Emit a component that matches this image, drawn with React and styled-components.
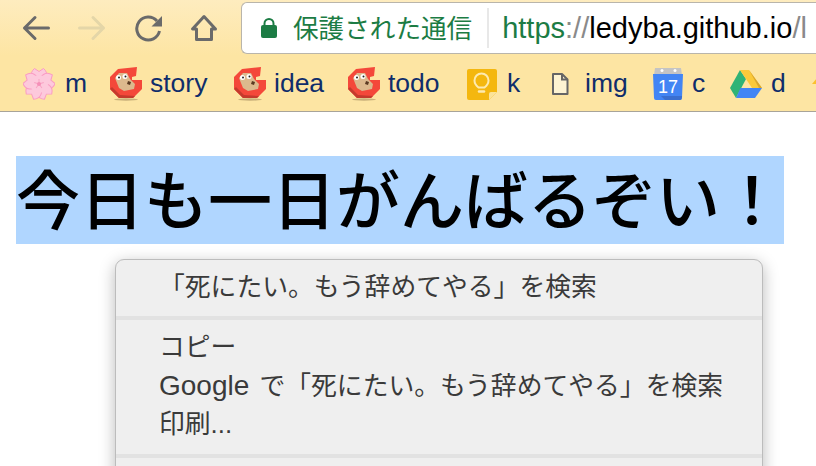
import React from "react";
import styled, { createGlobalStyle } from "styled-components";

const CJK = `"Liberation Sans", "Noto Sans CJK JP", sans-serif`;
const PETAL = "M16 17C7 14 6 6 11.500 1.500L16 4.500L20.500 1.500C26 6 25 14 16 17z";
const ANGLES = [0, 72, 144, 216, 288];

const Global = createGlobalStyle`
  html, body {
    margin: 0;
    padding: 0;
    background: #fff;
    overflow: hidden;
  }
`;

const Page = styled.div`
  position: relative;
  width: 816px;
  height: 466px;
  overflow: hidden;
  font-family: ${CJK};
`;

const Chrome = styled.div`
  height: 111px;
  background: linear-gradient(#feecbf 0, #fde5a3 56px, #fde5a3 100%);
  border-bottom: 1px solid #a8a49a;
  overflow: hidden;
`;

const Toolbar = styled.div`
  display: flex;
  align-items: center;
  gap: 28px;
  height: 56px;
  padding-left: 22px;
  box-sizing: border-box;
`;

const NavIcon = styled.svg`
  width: 28px;
  height: 28px;
  flex: none;
`;

const Omnibox = styled.div`
  display: flex;
  align-items: center;
  flex: none;
  width: 600px;
  height: 52px;
  margin-left: -5px;
  padding-left: 18px;
  box-sizing: border-box;
  background: #fff;
  border: 1px solid #b9b5ab;
  border-right: 0;
  border-radius: 6px 0 0 6px;
  font-size: 29px;
  white-space: nowrap;
`;

const Secure = styled.span`
  color: #1c7c44;
  font-size: 25.600px;
  line-height: 1;
  margin: 4px 0 0 15px;
`;

const Divider = styled.span`
  width: 2px;
  height: 40px;
  background: #e8e8e8;
  margin: 0 13px 0 15px;
`;

const Scheme = styled.span`
  color: #1c7c44;
`;

const Slashes = styled.span`
  color: #8a8a8a;
`;

const Host = styled.span`
  color: #000;
`;

const Bookmarks = styled.div`
  display: flex;
  align-items: center;
  height: 55px;
  padding-left: 23px;
  box-sizing: border-box;
`;

const Bookmark = styled.div`
  display: flex;
  align-items: center;
  flex: none;
  width: ${(props) => props.w}px;
  color: #0f2d6b;
  font-size: 26.500px;
  white-space: nowrap;
`;

const BookmarkIcon = styled.svg`
  width: 32px;
  height: 34px;
  flex: none;
  margin-right: ${(props) => props.gap || 8}px;
`;

const Heading = styled.h1`
  margin: 44px 0 0 16px;
  width: 768px;
  height: 88px;
  line-height: 92px;
  background: #b0d6ff;
  color: #000;
  font-size: 64px;
  font-weight: 500;
  white-space: nowrap;
`;

const Menu = styled.div`
  position: absolute;
  left: 115px;
  top: 259px;
  width: 648px;
  height: 260px;
  box-sizing: border-box;
  background: #efefef;
  border: 1px solid #bcbcbc;
  border-radius: 9px;
  box-shadow: 0 4px 16px rgba(0, 0, 0, 0.28);
  color: #3a3a3a;
  font-size: 25.800px;
`;

const MenuGroup = styled.div`
  height: ${(props) => props.h}px;
  padding-top: ${(props) => props.top}px;
  box-sizing: content-box;
  border-bottom: 4px solid #e2e2e2;
`;

const MenuItem = styled.div`
  height: 38.500px;
  line-height: 38.500px;
  padding-left: 43px;
  white-space: nowrap;
`;

const Latin = styled.span`
  font-size: 28px;
  margin-right: 3px;
`;

function Back() {
  return (
    <NavIcon viewBox="0 0 28 28" fill="none" stroke="#6a6a6a" strokeWidth="3" strokeLinecap="round" strokeLinejoin="round">
      <path d="M2.500 14h24M13 3.500 2.500 14 13 24.500" />
    </NavIcon>
  );
}

function Forward() {
  return (
    <NavIcon viewBox="0 0 28 28" fill="none" stroke="#e4d6a8" strokeWidth="3" strokeLinecap="round" strokeLinejoin="round">
      <path d="M1.500 14h24M15 3.500 25.500 14 15 24.500" />
    </NavIcon>
  );
}

function Reload() {
  return (
    <NavIcon viewBox="0 0 28 28" fill="none">
      <path d="M23 7A11.500 11.500 0 1 0 25.500 17" stroke="#6a6a6a" strokeWidth="3" />
      <path d="M28 2v10.500H17.500z" fill="#6a6a6a" />
    </NavIcon>
  );
}

function Home() {
  return (
    <NavIcon viewBox="0 0 28 28" fill="none" stroke="#6a6a6a" strokeWidth="3" strokeLinejoin="round">
      <path d="M14 2.500 2.500 15H6.500V25.500H21.500V15H25.500z" />
    </NavIcon>
  );
}

function Lock() {
  return (
    <svg viewBox="0 0 18 22" width="18" height="22">
      <path d="M4.500 9V6.500a4.500 4.500 0 0 1 9 0V9" fill="none" stroke="#1c7c44" strokeWidth="2" />
      <rect x="1" y="8" width="16" height="13" rx="2" fill="#1c7c44" />
    </svg>
  );
}

function Sakura() {
  return (
    <BookmarkIcon viewBox="0 0 32 34" gap={10}>
      <g fill="#fdc9dc" stroke="#fa9cc3" strokeWidth="1">
        {ANGLES.map((angle) => (
          <path key={angle} d={PETAL} transform={`rotate(${angle} 16 17)`} />
        ))}
      </g>
      <circle cx="16" cy="17" r="9" fill="#fdc9dc" />
      <g stroke="#f7a3c4" strokeWidth="1">
        {ANGLES.map((angle) => (
          <path key={angle} d="M16 17V12" transform={`rotate(${angle} 16 17)`} />
        ))}
      </g>
      <circle cx="16" cy="17" r="2" fill="#f58fb8" />
    </BookmarkIcon>
  );
}

function Gopher() {
  return (
    <BookmarkIcon viewBox="0 0 32 34">
      <ellipse cx="16" cy="32.500" rx="12" ry="1.200" fill="#c9b07a" />
      <path d="M8 2 27 0 26 9 22 10V13H32V22L23 31H9L0 22V10z" fill="#f4483a" />
      <path d="M0 22 9 31H23L25 29 10 28 2 20z" fill="#c53a2d" />
      <path d="M5 11 9 6H17L20 12 25 17 24 22 14 24 9 21z" fill="#dcb98d" />
      <circle cx="8.500" cy="10.500" r="2.500" fill="#fff" />
      <circle cx="15" cy="9.500" r="2.500" fill="#fff" />
      <circle cx="9" cy="10.500" r="1" fill="#222" />
      <circle cx="15.500" cy="9.500" r="1" fill="#222" />
      <path d="M18 14l3 1-1 3-3-1z" fill="#5a3a22" />
    </BookmarkIcon>
  );
}

function Keep() {
  return (
    <BookmarkIcon viewBox="0 0 32 34" gap={9}>
      <path d="M3 2h26a2 2 0 0 1 2 2v21l-8 8H3a2 2 0 0 1-2-2V4a2 2 0 0 1 2-2z" fill="#f4b70f" />
      <path d="M31 25h-6a2 2 0 0 0-2 2v6z" fill="#fbe39a" />
      <path d="M12.500 20.500C10 18.500 8.500 16 8.500 13.500a7 7 0 0 1 14 0c0 2.500-1.500 5-4 7z" fill="none" stroke="#fdeab0" strokeWidth="2" />
      <path d="M13 24.500h5" stroke="#fdeab0" strokeWidth="2.500" strokeLinecap="round" />
    </BookmarkIcon>
  );
}

function FileIcon() {
  return (
    <BookmarkIcon viewBox="0 0 32 34" gap={7}>
      <path d="M7 7h9l5.500 5.500V27H7z" fill="#fdf3d2" stroke="#666" strokeWidth="2" strokeLinejoin="round" />
      <path d="M16 7v5.500h5.500" fill="none" stroke="#666" strokeWidth="2" />
    </BookmarkIcon>
  );
}

function Calendar() {
  return (
    <BookmarkIcon viewBox="0 0 32 34" gap={7}>
      <path d="M2 1h26l1 7H1z" fill="#c4c4c4" />
      <circle cx="9" cy="3.500" r="1.500" fill="#fff" />
      <circle cx="22" cy="3.500" r="1.500" fill="#fff" />
      <path d="M0 7h30l-1 24a2 2 0 0 1-2 2H3a2 2 0 0 1-2-2z" fill="#4285f4" />
      <path d="M8 29h21l-.3 2a2 2 0 0 1-2 2H12z" fill="#3a6fd0" />
      <text x="15" y="26" textAnchor="middle" fontSize="18" fill="#fff" fontFamily="Liberation Sans">17</text>
    </BookmarkIcon>
  );
}

function Drive() {
  return (
    <BookmarkIcon viewBox="0 0 32 34" gap={9}>
      <path d="M10 3 16 12 6 31 0 21z" fill="#2fb376" />
      <path d="M10 3H19L32 21H22z" fill="#fbc93a" />
      <path d="M10.500 21H32L25 31H6z" fill="#4285f4" />
      <path d="M19 3 32 21H29z" fill="#d9a62e" />
    </BookmarkIcon>
  );
}

function Next() {
  return (
    <BookmarkIcon viewBox="0 0 32 34">
      <path d="M1 17 6 11V17z" fill="#fbc02d" />
    </BookmarkIcon>
  );
}

export default function App() {
  return (
    <Page>
      <Global />
      <Chrome>
        <Toolbar>
          <Back />
          <Forward />
          <Reload />
          <Home />
          <Omnibox>
            <Lock />
            <Secure>保護された通信</Secure>
            <Divider />
            <Scheme>https</Scheme>
            <Slashes>://</Slashes>
            <Host>ledyba.github.io</Host>
            <Slashes>/l</Slashes>
          </Omnibox>
        </Toolbar>
        <Bookmarks>
          <Bookmark w={87}><Sakura />m</Bookmark>
          <Bookmark w={124}><Gopher />story</Bookmark>
          <Bookmark w={114}><Gopher />idea</Bookmark>
          <Bookmark w={118}><Gopher />todo</Bookmark>
          <Bookmark w={80}><Keep />k</Bookmark>
          <Bookmark w={107}><FileIcon />img</Bookmark>
          <Bookmark w={77}><Calendar />c</Bookmark>
          <Bookmark w={81}><Drive />d</Bookmark>
          <Bookmark w={40}><Next /></Bookmark>
        </Bookmarks>
      </Chrome>
      <Heading>今日も一日がんばるぞい！</Heading>
      <Menu>
        <MenuGroup h={48} top={8}>
          <MenuItem>「死にたい。もう辞めてやる」を検索</MenuItem>
        </MenuGroup>
        <MenuGroup h={126} top={8}>
          <MenuItem>コピー</MenuItem>
          <MenuItem><Latin>Google</Latin> で「死にたい。もう辞めてやる」を検索</MenuItem>
          <MenuItem>印刷...</MenuItem>
        </MenuGroup>
      </Menu>
    </Page>
  );
}
